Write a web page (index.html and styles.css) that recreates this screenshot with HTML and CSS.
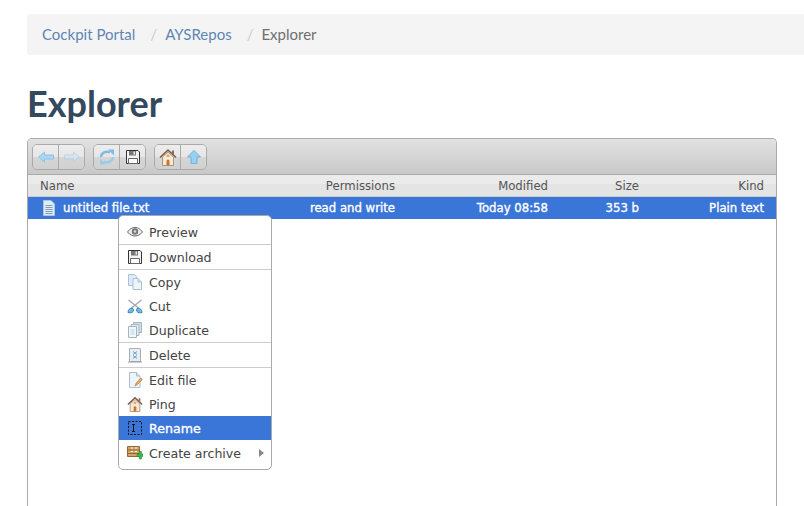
FILE: index.html
```html
<!DOCTYPE html>
<html lang="en">
<head>
  <meta charset="UTF-8">
  <title>Explorer</title>
  <link rel="stylesheet" href="styles.css">
</head>
<body>
  <svg class="sprites" width="0" height="0">
    <symbol id="i-disk" viewBox="0 0 16 16">
      <path d="M1.500 1.500h11.500l1.500 1.500v11.500h-13z" fill="#f4f4f4" stroke="#333"/>
      <path d="M4 2h7v4.500H4z" fill="#777"/>
      <path d="M8.500 2.500h1.500v3H8.500z" fill="#eee"/>
      <path d="M3.500 9.500h9v5h-9z" fill="#fff" stroke="#666"/>
    </symbol>
    <symbol id="i-home" viewBox="0 0 18 18">
      <path d="M3.500 9l5.500-5 5.500 5v8.500h-11z" fill="#f7e9d6" stroke="#b09478"/>
      <path d="M1 9.500 9 2l8 7.500" fill="none" stroke="#7d5a4a" stroke-width="1.600"/>
      <path d="M13 2.500h2v4.200l-2-2z" fill="#8c6a5a"/>
      <path d="M7.500 17.500v-4.500a1.500 1.500 0 0 1 3 0v4.500z" fill="#c9772f"/>
      <path d="M7.500 6.500h3v2.500h-3z" fill="#d9ae76"/>
    </symbol>
    <symbol id="i-copy" viewBox="0 0 16 16">
      <path d="M1.500.5h6l2 2v9h-8z" fill="#dcebf8" stroke="#a9c2d8"/>
      <path d="M6 4.500h5l3.500 3.500v7.500H6z" fill="#eef5fb" stroke="#a9c2d8"/>
      <path d="M11 4.500V8h3.500" fill="#cfe0ef" stroke="#a9c2d8"/>
    </symbol>
    <symbol id="i-dup" viewBox="0 0 16 16">
      <path d="M6.500.5h8v10h-8z" fill="#d6e2ea" stroke="#a4b4bd"/>
      <path d="M4 2.500h8v11H4z" fill="#e4edf3" stroke="#a4b4bd"/>
      <path d="M1.500 4.500h8v11h-8z" fill="#f0f6fa" stroke="#a4b4bd"/>
      <path d="M3.500 8h4M3.500 10h4M3.500 12h4" stroke="#c3d3de"/>
    </symbol>
  </svg>

  <nav class="crumbs">
    <a href="#">Cockpit Portal</a>
    <span class="crumb-sep">/</span>
    <a href="#">AYSRepos</a>
    <span class="crumb-sep">/</span>
    <span class="crumb-here">Explorer</span>
  </nav>

  <h1 class="title">Explorer</h1>

  <div class="elfinder">
    <div class="toolbar">
      <div class="btn-group">
        <button class="tool-btn">
          <svg width="16" height="16" viewBox="0 0 16 16"><path d="M.5 8l6-5v3h9v4h-9v3z" fill="#a9d6f2" stroke="#8cc3e6"/></svg>
        </button>
        <button class="tool-btn">
          <svg width="16" height="16" viewBox="0 0 16 16" opacity=".65"><path d="M15.500 8l-6-5v3h-9v4h9v3z" fill="#cfe6f4" stroke="#a9cde3"/></svg>
        </button>
      </div>
      <div class="btn-group">
        <button class="tool-btn">
          <svg width="16" height="16" viewBox="0 0 16 16"><path d="M2 8A6 5.500 0 0 1 11 3.500" fill="none" stroke="#7fbbe2" stroke-width="2.400"/><path d="M9 .5h6v6z" fill="#7fbbe2"/><path d="M14 8A6 5.500 0 0 1 5 12.500" fill="none" stroke="#9ccbe9" stroke-width="2.400"/><path d="M7 15.500H1v-6z" fill="#9ccbe9"/></svg>
        </button>
        <button class="tool-btn"><svg width="16" height="16"><use href="#i-disk"/></svg></button>
      </div>
      <div class="btn-group">
        <button class="tool-btn"><svg width="18" height="18"><use href="#i-home"/></svg></button>
        <button class="tool-btn">
          <svg width="16" height="16" viewBox="0 0 16 16"><path d="M8 1.500l6.500 6.500H11v6.500H5V8H1.500z" fill="#97d0f0" stroke="#6fb2da"/></svg>
        </button>
      </div>
    </div>

    <div class="file-row file-head">
      <span class="col-name">Name</span>
      <span>Permissions</span>
      <span>Modified</span>
      <span>Size</span>
      <span>Kind</span>
    </div>
    <div class="file-row file-selected">
      <span class="col-name">
        <svg class="file-icon" width="14" height="16" viewBox="0 0 14 16"><path d="M1.500.5h7.500l3.500 3.500v11.500h-11z" fill="#dcebf6" stroke="#a9c6de"/><path d="M3.500 5.500h7M3.500 7.500h7M3.500 9.500h7M3.500 11.500h7M3.500 13.500h7" stroke="#7f9db5"/></svg>
        untitled file.txt
      </span>
      <span>read and write</span>
      <span>Today 08:58</span>
      <span>353 b</span>
      <span>Plain text</span>
    </div>
  </div>

  <ul class="context-menu">
    <li class="menu-item">
      <svg width="16" height="16" viewBox="0 0 16 16"><path d="M.5 8C3 4.500 5.500 3.500 8 3.500s5 1 7.500 4.500c-2.500 3-5 4-7.500 4s-5-1-7.500-4z" fill="#eee" stroke="#666"/><circle cx="8" cy="7.500" r="3.200" fill="#777"/><circle cx="8" cy="7.500" r="1.200" fill="#ddd"/></svg>
      Preview
    </li>
    <li class="menu-sep"></li>
    <li class="menu-item"><svg width="16" height="16"><use href="#i-disk"/></svg>Download</li>
    <li class="menu-sep"></li>
    <li class="menu-item"><svg width="16" height="16"><use href="#i-copy"/></svg>Copy</li>
    <li class="menu-item">
      <svg width="16" height="16" viewBox="0 0 16 16"><path d="M1.500 2l10 8M14.500 2l-10 8" stroke="#a3adb4" stroke-width="1.600"/><path d="M1 14.500c0-3 2-4.500 4.500-4.500l1 2c0 2-2 3.500-5.500 2.500zM15 14.500c0-3-2-4.500-4.500-4.500l-1 2c0 2 2 3.500 5.500 2.500z" fill="#7ab8e0" stroke="#2f86c5"/></svg>
      Cut
    </li>
    <li class="menu-item"><svg width="16" height="16"><use href="#i-dup"/></svg>Duplicate</li>
    <li class="menu-sep"></li>
    <li class="menu-item">
      <svg width="16" height="16" viewBox="0 0 16 16"><path d="M2.500 1.500h11v13h-11z" fill="#e6eef3" stroke="#a8b0b4"/><path d="M1 15h14" stroke="#999"/><path d="M6 4.500l4 3M10 4.500l-4 3M6 8.500l4 3M10 8.500l-4 3" stroke="#6ea6cf"/></svg>
      Delete
    </li>
    <li class="menu-sep"></li>
    <li class="menu-item">
      <svg width="16" height="16" viewBox="0 0 16 16"><path d="M2.500.5h7l3.500 3.500v11.500H2.500z" fill="#edf4fa" stroke="#a9c0d4"/><path d="M9.500.5V4H13" fill="#d6e4ef" stroke="#a9c0d4"/><path d="M8 14l1-3 5-5 1.500 1.500-5 5z" fill="#e9a65a" stroke="#b87a35" stroke-width=".6"/></svg>
      Edit file
    </li>
    <li class="menu-item"><svg width="16" height="16"><use href="#i-home"/></svg>Ping</li>
    <li class="menu-item menu-active">
      <svg width="16" height="16" viewBox="0 0 16 16"><path d="M1.500 1.500h13v13h-13z" fill="none" stroke="#111" stroke-dasharray="2 1.500"/><path d="M5 4.500h3M5 11.500h3M6.500 4.500v7" stroke="#111"/></svg>
      Rename
    </li>
    <li class="menu-item menu-sub">
      <svg width="16" height="16" viewBox="0 0 16 16"><path d="M.5 1.500h12v10H.5z" fill="#d9a25f" stroke="#8b6a3c"/><path d="M.5 5h12M.5 8.500h12" stroke="#8b6a3c"/><path d="M4 3h2M4 6.500h2M8 3h2M8 6.500h2" stroke="#fff"/><path d="M10 9h2.200V6.500h2.300V9H16v2.500h-1.500V14h-2.300v-2.500H10z" fill="#39b54a" stroke="#1f8a31" stroke-width=".5"/></svg>
      Create archive
    </li>
  </ul>
</body>
</html>
```

FILE: styles.css
```css
html, body {
  height: 100%;
}

body {
  margin: 0;
  padding: 14px 0 0 27px;
  box-sizing: border-box;
  overflow: hidden;
  background-color: #fff;
  font-family: Lato, sans-serif;
}

.sprites {
  display: block;
  height: 0;
}

.crumbs {
  display: flex;
  align-items: center;
  height: 41px;
  padding: 0 0 2px 15px;
  box-sizing: border-box;
  background-color: #f4f4f4;
  border-radius: 4px 0 0 4px;
  font-size: 15px;
  color: #7b8a8b;
}

.crumbs a {
  color: #5e86b5;
  text-decoration: none;
}

.crumb-sep {
  margin: 0 8px 0 15px;
  color: #ccc;
}

.crumb-here {
  color: #6f6f6f;
}

.title {
  margin: 26px 0 13px;
  font-size: 36px;
  line-height: 44px;
  font-weight: 700;
  color: #34495e;
}

.elfinder {
  width: 748px;
  height: 367px;
  background-color: #fff;
  border: 1px solid #aaa;
  border-bottom: 0;
  border-radius: 5px 5px 0 0;
  font-family: "DejaVu Sans", sans-serif;
  font-size: 11.7px;
}

.toolbar {
  display: flex;
  gap: 8px;
  height: 36px;
  padding: 5px 4px 0;
  box-sizing: border-box;
  background: linear-gradient(#e2e2e2, #c8c8c8);
  border-bottom: 1px solid #aaa;
  border-radius: 4px 4px 0 0;
}

.btn-group {
  display: flex;
  width: 53px;
  height: 26px;
  border: 1px solid #aaa;
  border-radius: 5px;
  overflow: hidden;
  box-sizing: border-box;
}

.tool-btn {
  display: flex;
  flex: 1;
  align-items: center;
  justify-content: center;
  padding: 0;
  border: 0;
  background: linear-gradient(#ededed 0, #e6e6e6 50%, #d6d6d6 50%, #d0d0d0 100%);
}

.tool-btn + .tool-btn {
  border-left: 1px solid #aaa;
}

.file-row {
  display: grid;
  grid-template-columns: 1fr 120px 153px 91px 125px;
  align-items: center;
  text-align: right;
}

.file-row > span {
  padding-right: 12px;
  white-space: nowrap;
}

.file-row > .col-name {
  display: flex;
  align-items: center;
  padding-left: 12px;
  text-align: left;
}

.file-head {
  height: 22px;
  box-sizing: border-box;
  background: linear-gradient(#ebebeb 45%, #e4e4e4 45%);
  border-bottom: 1px solid #ccc;
  color: #555;
}

.file-selected {
  height: 22px;
  background-color: #3a75d8;
  color: #fff;
  -webkit-text-stroke: .35px #fff;
}

.file-icon {
  margin: 0 7px 0 2px;
}

.context-menu {
  position: absolute;
  left: 118px;
  top: 215px;
  width: 152px;
  margin: 0;
  padding: 4px 0;
  list-style: none;
  background-color: #fff;
  border: 1px solid #aaa;
  border-radius: 5px;
  font-family: "DejaVu Sans", sans-serif;
  font-size: 12.6px;
  color: #444;
}

.menu-item {
  display: flex;
  align-items: center;
  position: relative;
  gap: 6px;
  height: 24px;
  padding-left: 8px;
}

.menu-sep {
  height: 1px;
  background-color: #ccc;
}

.menu-active {
  background-color: #3a75d8;
  color: #fff;
  -webkit-text-stroke: .35px #fff;
}

.menu-sub {
  margin-top: 1px;
}

.menu-sub::after {
  content: "";
  position: absolute;
  right: 7px;
  top: 8px;
  border-left: 5px solid #888;
  border-top: 4px solid transparent;
  border-bottom: 4px solid transparent;
}
```
